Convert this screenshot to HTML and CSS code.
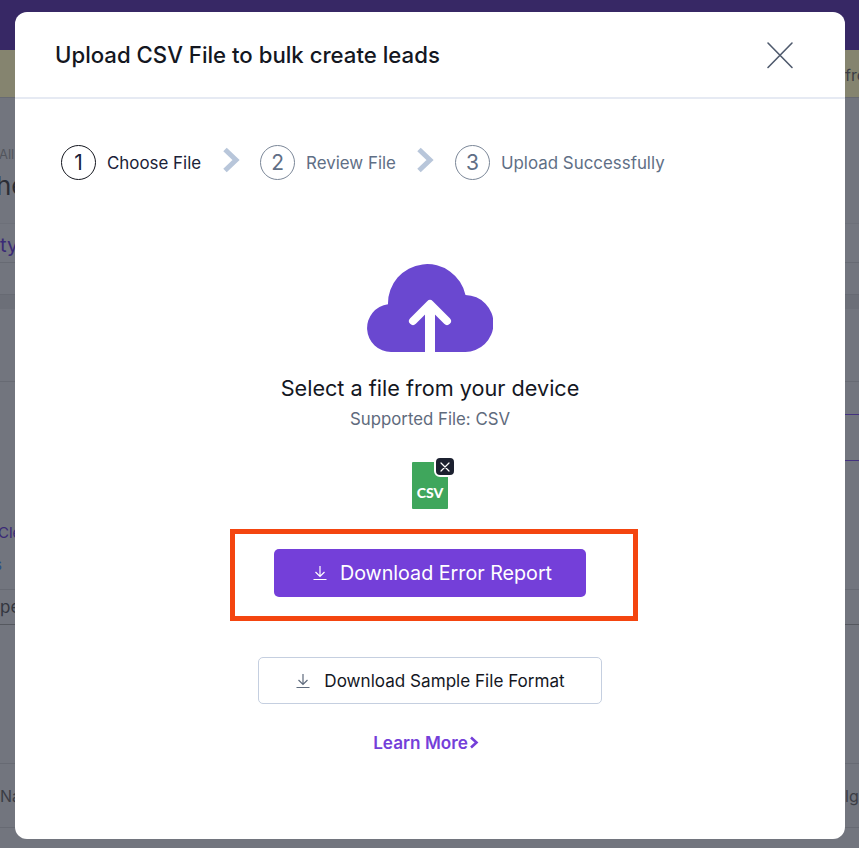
FILE: index.html
```html
<!DOCTYPE html>
<html lang="en">
<head>
  <meta charset="UTF-8">
  <meta name="viewport" content="width=device-width, initial-scale=1.0">
  <title>Upload CSV File</title>
  <link rel="stylesheet" href="styles.css">
</head>
<body>
  <div class="page">
    <div class="nav"></div>
    <div class="row banner"><span></span><span class="edge">from</span></div>
    <div class="row heading">
      <span class="crumb">All</span>
      <span class="title">he</span>
    </div>
    <div class="row tabs"><span class="tab">ty</span></div>
    <div class="row spacer"></div>
    <div class="row band"></div>
    <div class="row lined">
      <div class="purple-lines"></div>
    </div>
    <div class="row filters">
      <span class="clear">Cle</span>
      <span class="link">s</span>
    </div>
    <div class="row type"><span>pe</span></div>
    <div class="row gap"></div>
    <div class="row names"><span>Na</span><span class="edge">lge</span></div>
    <div class="row foot"></div>
  </div>

  <div class="modal">
    <header class="modal-head">
      <h1>Upload CSV File to bulk create leads</h1>
      <svg class="close" width="28" height="28" viewBox="0 0 28 28" fill="none" stroke="#4f5a6d" stroke-width="1.6" stroke-linecap="round">
        <path d="M2 2l24 24.500M26 2L2 26.500"/>
      </svg>
    </header>

    <div class="steps">
      <div class="step active"><span class="num">1</span><span>Choose File</span></div>
      <svg class="chev" width="18" height="26" viewBox="0 0 18 26" fill="none" stroke="#b8c6da" stroke-width="5"><path d="M3 2.500L14 13 3 23.500"/></svg>
      <div class="step"><span class="num">2</span><span>Review File</span></div>
      <svg class="chev" width="18" height="26" viewBox="0 0 18 26" fill="none" stroke="#b8c6da" stroke-width="5"><path d="M3 2.500L14 13 3 23.500"/></svg>
      <div class="step"><span class="num">3</span><span>Upload Successfully</span></div>
    </div>

    <div class="upload">
      <svg class="cloud" width="126" height="88" viewBox="0 0 126 88">
        <path fill="#6a48d0" d="M24 88A24 24 0 0 1 21 40.200A39.200 39.200 0 0 1 98.500 31A28.500 28.500 0 0 1 97.500 88Z"/>
        <path fill="none" stroke="#fff" stroke-width="8" stroke-linecap="round" stroke-linejoin="round" d="M46 57L63 40L80 57"/>
        <rect x="58" y="40" width="10" height="48" fill="#fff"/>
      </svg>
      <p class="select">Select a file from your device</p>
      <p class="supported">Supported File: CSV</p>

      <div class="csv">
        <span class="csv-text">CSV</span>
        <span class="csv-remove">
          <svg width="10" height="10" viewBox="0 0 10 10" stroke="#fff" stroke-width="1.200" stroke-linecap="round"><path d="M1 1l8 8M9 1L1 9"/></svg>
        </span>
      </div>

      <div class="highlight">
        <button class="btn primary">
          <svg width="16" height="16" viewBox="0 0 16 16" fill="none" stroke="#fff" stroke-width="1.200"><path d="M8 1v10M3.500 7L8 11.500 12.500 7M1.500 14.500h13"/></svg>
          Download Error Report
        </button>
      </div>

      <button class="btn outline">
        <svg width="16" height="16" viewBox="0 0 16 16" fill="none" stroke="#5f6b7d" stroke-width="1.200"><path d="M8 1v10M3.500 7L8 11.500 12.500 7M1.500 14.500h13"/></svg>
        Download Sample File Format
      </button>

      <a class="learn" href="#">Learn More
        <svg width="10" height="13" viewBox="0 0 10 13" fill="none" stroke="#743fd9" stroke-width="2.600"><path d="M2 1.500L7.500 6.500 2 11.500"/></svg>
      </a>
    </div>
  </div>
</body>
</html>
```

FILE: styles.css
```css
* {
  box-sizing: border-box;
}

body {
  margin: 0;
  background: #72757e;
  font-family: "Inter", "Roboto", sans-serif;
  overflow: hidden;
}

/* dimmed page behind the modal */
.page {
  height: 848px;
  color: #33363f;
  font-size: 18px;
}

.nav {
  height: 50px;
  background: #372865;
}

.row {
  display: flex;
  justify-content: space-between;
  width: 859px;
  border-bottom: 1px solid #676a73;
  overflow: hidden;
}

.edge {
  width: 14px;
  flex: none;
  white-space: nowrap;
  overflow: hidden;
}

.banner {
  height: 48px;
  background: #85846f;
  align-items: center;
  padding-top: 3px;
  font-size: 16px;
  color: #3b3d45;
}

.heading {
  height: 126px;
  flex-direction: column;
  justify-content: flex-start;
  padding: 48px 0 0;
  border-bottom: 1px solid #6d7079;
}

.crumb {
  font-size: 13px;
  color: #52555d;
  margin-left: -1px;
}

.title {
  font-size: 26px;
  line-height: 30px;
  margin: 9px 0 0 -4px;
  color: #2b2d35;
}

.tabs {
  height: 39px;
  background: #73767f;
  align-items: center;
  padding-top: 4px;
  font-size: 20px;
  color: #3a2a76;
}

.spacer {
  height: 32px;
}

.band {
  height: 87px;
  background: linear-gradient(#6c6f78 0, #6c6f78 14px, #72757e 14px);
  border-bottom: 1px solid #676a73;
}

.lined {
  height: 85px;
  flex: none;
  border-bottom: none;
}

.purple-lines {
  margin: 32px 0 0 845px;
  width: 14px;
  height: 47px;
  border-top: 1px solid #44337f;
  border-bottom: 1px solid #44337f;
}

.filters {
  height: 123px;
  flex: none;
  flex-direction: column;
  justify-content: flex-start;
  border-bottom: 1px solid #676a73;
  font-size: 15px;
}

.clear {
  margin: 56px 0 0 -2px;
  color: #3a2a76;
}

.link {
  margin: 13px 0 0 -6px;
  color: #2a4f8a;
}

.type {
  height: 35px;
  align-items: center;
  border-bottom: 1px solid #55585f;
  font-size: 17px;
}

.gap {
  height: 139px;
}

.names {
  height: 64px;
  align-items: center;
  font-size: 16px;
  color: #3b3d45;
}

.foot {
  height: 20px;
  border-bottom: none;
}

/* modal */
.modal {
  position: absolute;
  top: 12px;
  left: 15px;
  width: 830px;
  height: 827px;
  background: #fff;
  border-radius: 12px;
}

.modal-head {
  display: flex;
  justify-content: space-between;
  align-items: center;
  height: 87px;
  padding: 0 51px 0 40px;
  border-bottom: 2px solid #e6eaf3;
}

.modal-head h1 {
  margin: 0;
  font-size: 22.200px;
  font-weight: 500;
  color: #14171f;
}

.steps {
  display: flex;
  align-items: center;
  gap: 20.500px;
  margin: 46px 0 0 46px;
}

.step {
  display: flex;
  align-items: center;
  gap: 11px;
  font-size: 16.900px;
  color: #5f6f86;
}

.step.active {
  color: #1a2238;
}

.num {
  display: flex;
  justify-content: center;
  align-items: center;
  width: 35px;
  height: 35px;
  border: 1px solid #7b8798;
  border-radius: 50%;
  font-size: 21px;
}

.step.active .num {
  border-color: #14171f;
}

.chev {
  margin-top: -5px;
}

.upload {
  display: flex;
  flex-direction: column;
  align-items: center;
  margin-top: 84px;
}

.cloud {
  display: block;
}

.select {
  margin: 22px 0 0;
  font-size: 21.650px;
  line-height: 28px;
  color: #14171f;
}

.supported {
  margin: 6px 0 0;
  font-size: 16.800px;
  line-height: 22px;
  color: #5f6b7d;
}

.csv {
  position: relative;
  display: flex;
  justify-content: center;
  align-items: flex-end;
  width: 36px;
  height: 47px;
  margin-top: 32px;
  padding-bottom: 8px;
  background: #3fa65c;
  border-radius: 1px;
}

.csv-text {
  font-family: "Lato", sans-serif;
  font-size: 14px;
  line-height: 16px;
  font-weight: 900;
  color: #fff;
}

.csv-remove {
  position: absolute;
  top: -6px;
  right: -8px;
  display: flex;
  justify-content: center;
  align-items: center;
  width: 22px;
  height: 21px;
  background: #1c2130;
  border: 2px solid #fff;
  border-radius: 6px;
}

/* the red mark sits a little off centre from the button inside it */
.highlight {
  display: flex;
  justify-content: center;
  align-items: center;
  width: 408px;
  height: 92px;
  margin: 20px 0 0 8px;
  padding: 0 8px 5px 0;
  border: 5px solid #f4450f;
}

.btn {
  display: flex;
  justify-content: center;
  align-items: center;
  gap: 13px;
  border-radius: 5px;
  font-family: inherit;
  cursor: pointer;
}

.primary {
  width: 312px;
  height: 48px;
  gap: 12px;
  padding-right: 2px;
  border: none;
  background: #743fd9;
  color: #fff;
  font-size: 19.700px;
}

.outline {
  width: 344px;
  height: 47px;
  margin-top: 36px;
  border: 1px solid #c5cfe0;
  background: #fff;
  color: #14171f;
  font-size: 17.100px;
}

.learn {
  display: flex;
  align-items: center;
  gap: 1px;
  margin: 28px 8px 0 0;
  font-size: 17.200px;
  font-weight: 600;
  color: #743fd9;
  text-decoration: none;
}
```
